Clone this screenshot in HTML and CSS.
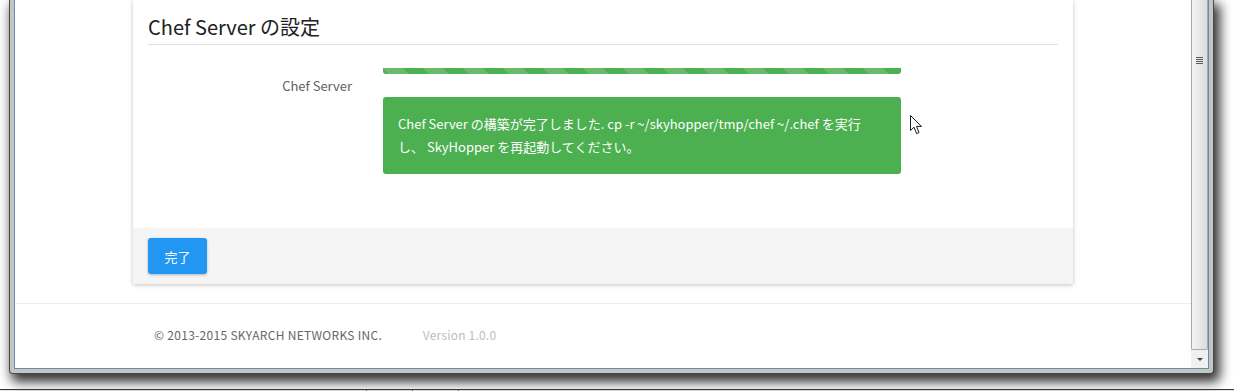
FILE: index.html
```html
<!DOCTYPE html>
<html lang="ja">
<head>
    <meta charset="UTF-8">
    <meta name="viewport" content="width=device-width, initial-scale=1.0">
    <title>Chef Server の設定</title>
    <link rel="stylesheet" href="styles.css">
</head>
<body>
    <div id="window">
        <div id="viewport">
            <div id="page">
                <div class="panel">
                    <div class="panel-body">
                        <h3 class="panel-title">Chef Server の設定</h3>
                        <div class="form-row">
                            <label class="form-label">Chef Server</label>
                            <div class="form-control">
                                <div class="progress"></div>
                                <div class="alert">Chef Server の構築が完了しました. cp -r ~/skyhopper/tmp/chef ~/.chef を実行し、 SkyHopper を再起動してください。</div>
                            </div>
                        </div>
                    </div>
                    <div class="panel-footer">
                        <button class="btn-primary">完了</button>
                    </div>
                </div>

                <footer id="footer">
                    <span class="copyright">© 2013-2015 SKYARCH NETWORKS INC.</span>
                    <span class="version">Version 1.0.0</span>
                </footer>

                <!-- mouse pointer -->
                <svg class="cursor" width="13" height="20" viewBox="0 0 13 20">
                    <path d="M0.5 0.5 L0.5 15.5 L4 12.2 L6.6 18.6 L9 17.6 L6.5 11.4 L11.5 11.4 Z" fill="#fff" stroke="#1a1a2a" stroke-width="1"/>
                </svg>
            </div>
            <div id="scrollbar">
                <div class="thumb">
                    <div class="grip"></div>
                </div>
                <div class="arrow-down"></div>
            </div>
        </div>
    </div>
    <div id="taskbar">
        <div class="task"></div>
        <div class="task"></div>
        <div class="task"></div>
    </div>
</body>
</html>
```

FILE: styles.css
```css
/* General Styles */
body {
    margin: 0;
    padding: 0;
    width: 1234px;
    height: 391px;
    overflow: hidden;
    background: #fff;
    font-family: "Noto Sans CJK JP", "Noto Sans", sans-serif;
}

/* Window frame */
#window {
    position: relative;
    z-index: 1;
    margin-left: 9px;
    width: 1205px;
    height: 374px;
    box-sizing: border-box;
    background: #c6c6c1;
    border: 1px solid #4a4a4a;
    border-top: none;
    border-radius: 0 0 4px 4px;
    padding: 0 4px 4px 4px;
    box-shadow: 4px 6px 12px 2px rgba(0, 0, 0, 0.8);
}

#viewport {
    display: flex;
    height: 100%;
    box-sizing: border-box;
    border: 1px solid #5b8fb6;
    border-top: none;
    background: #fff;
}

#page {
    position: relative;
    flex: 1;
    overflow: hidden;
    background: #fff;
}

/* Scrollbar */
#scrollbar {
    width: 17px;
    display: flex;
    flex-direction: column;
    background: #e9e9e9;
}

.thumb {
    flex: 1;
    border: 1px solid #a8a8a8;
    border-top: none;
    border-radius: 0 0 2px 2px;
    background: linear-gradient(to right, #f4f4f4, #dcdcdc);
    display: flex;
    justify-content: center;
    padding-top: 57px;
}

.grip {
    width: 7px;
    height: 7px;
    background: repeating-linear-gradient(to bottom, #5a5a5a 0, #5a5a5a 1px, transparent 1px, transparent 2px);
}

.arrow-down {
    height: 18px;
    display: flex;
    justify-content: center;
    align-items: center;
    background: #f0f0f0;
}

.arrow-down::before {
    content: "";
    border-left: 3px solid transparent;
    border-right: 3px solid transparent;
    border-top: 3px solid #444;
}

/* Panel */
.panel {
    width: 940px;
    margin: 0 auto;
    background: #fff;
    box-shadow: 0 1px 4px rgba(0, 0, 0, 0.25);
}

.panel-body {
    padding: 16px 15px 54px 15px;
}

.panel-title {
    margin: 0;
    font-size: 20px;
    font-weight: 400;
    line-height: 22px;
    color: #212121;
    padding-bottom: 6px;
    border-bottom: 1px solid #e0e0e0;
}

.form-row {
    display: flex;
    margin-top: 23px;
}

.form-label {
    width: 204px;
    padding-top: 9px;
    text-align: right;
    font-size: 13px;
    line-height: 18px;
    color: #616161;
}

.form-control {
    width: 518px;
    margin-left: 31px;
}

.progress {
    height: 6px;
    border-radius: 0 0 3px 3px;
    background-color: #4caf50;
    background-image: linear-gradient(45deg, rgba(255, 255, 255, 0.15) 25%, transparent 25%, transparent 50%, rgba(255, 255, 255, 0.15) 50%, rgba(255, 255, 255, 0.15) 75%, transparent 75%, transparent);
    background-size: 40px 40px;
    margin-bottom: 23px;
}

.alert {
    background: #4caf50;
    color: #fff;
    border-radius: 3px;
    padding: 15px 15px 16px 15px;
    font-size: 13px;
    line-height: 23px;
}

.panel-footer {
    background: #f5f5f5;
    padding: 10px 15px;
}

.btn-primary {
    height: 36px;
    width: 59px;
    border: none;
    border-radius: 3px;
    background: #2196f3;
    color: #fff;
    font-family: inherit;
    font-size: 13px;
    box-shadow: 0 1px 3px rgba(0, 0, 0, 0.25);
    cursor: pointer;
}

/* Page footer */
#footer {
    margin-top: 19px;
    border-top: 1px solid #eeeeee;
    padding: 22px 0 0 139px;
    font-size: 12px;
    line-height: 17px;
}

.copyright {
    color: #666;
    letter-spacing: 0.3px;
}

.version {
    color: #bdbdbd;
    margin-left: 38px;
    letter-spacing: 0.2px;
}

.cursor {
    position: absolute;
    left: 895px;
    top: 115px;
}

/* Taskbar strip under the window */
#taskbar {
    margin-top: 15px;
    height: 2px;
    border-top: 1px solid #3a3a3a;
    background: #e6e6e6;
    display: flex;
    padding-left: 366px;
    gap: 1px;
}

.task {
    width: 44px;
    border-left: 1px solid #777;
}
```
